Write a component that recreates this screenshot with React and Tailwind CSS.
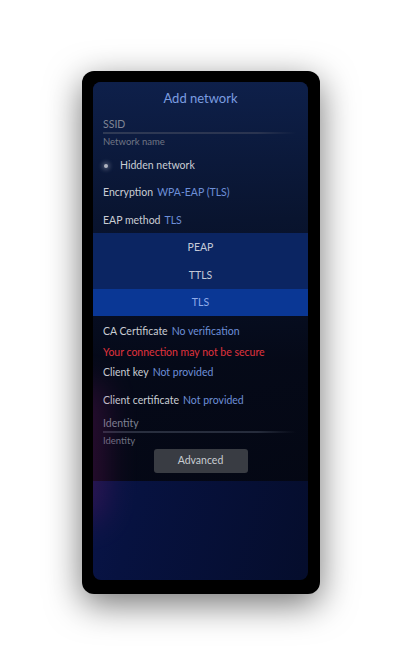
import React from "react";

const font = { fontFamily: '"Lato", "Open Sans", sans-serif' };

function Row({ h, children, className = "" }) {
  return (
    <div className={`flex items-center pl-[10px] ${className}`} style={{ height: h }}>
      {children}
    </div>
  );
}

export default function App() {
  return (
    <div className="w-[400px] h-[659px] bg-white pt-[71px] pl-[82px]" style={font}>
      <div className="w-[238px] h-[523px] bg-black rounded-[12px] pt-[11px] pl-[11px] pr-[12px] pb-[14px] shadow-[0_10px_35px_rgba(0,0,0,0.55)]">
        <div className="relative w-full h-full rounded-[8px] overflow-hidden bg-[linear-gradient(105deg,#0d1155_0%,#0b1650_15%,#071240_45%,#050d2c_100%)]">
          <div className="relative flex flex-col h-[399px] bg-[linear-gradient(180deg,rgba(14,32,74,0.97)_0%,rgba(9,20,46,0.96)_35%,rgba(5,9,22,0.95)_70%,rgba(4,7,18,0.93)_100%)]">
            <div className="h-[32px] pt-[2px] flex items-center justify-center text-[13px] text-[#7b9de0]">
              Add network
            </div>
            <Row h={18} className="pt-[3px] text-[10.5px] text-[#7f8594]">SSID</Row>
            <div className="ml-[10px] mr-[12px] h-[2px] bg-[linear-gradient(90deg,#2f3a55_0%,#2a3450_80%,rgba(42,52,80,0)_100%)]"></div>
            <Row h={16} className="pt-[1px] text-[9.5px] text-[#6f7584]">Network name</Row>
            <Row h={28} className="pt-[3px] text-[10.5px] text-[#c9cdd4]">
              <span className="w-[4px] h-[4px] rounded-full bg-[#b0b4c0] shadow-[0_0_4px_2px_rgba(200,205,220,0.3)] ml-[1px] mr-[12px]"></span>
              Hidden network
            </Row>
            <Row h={27} className="pt-[2px] text-[10.5px] text-[#c9cdd4]">
              Encryption<span className="ml-[4px] text-[#6d8fd8]">WPA-EAP (TLS)</span>
            </Row>
            <Row h={28} className="pt-[3px] text-[10.5px] text-[#c9cdd4]">
              EAP method<span className="ml-[4px] text-[#6d8fd8]">TLS</span>
            </Row>
            <div className="flex flex-col text-[10.5px]">
              <div className="h-[28px] pt-[1px] flex items-center justify-center bg-[#0b2562] text-[#c5cad8]">PEAP</div>
              <div className="h-[28px] pt-[1px] flex items-center justify-center bg-[#0b2562] text-[#c5cad8]">TTLS</div>
              <div className="h-[27px] pt-[1px] flex items-center justify-center bg-[#0a3795] text-[#8fabea]">TLS</div>
            </div>
            <Row h={28} className="pt-[3px] text-[10.5px] text-[#c9cdd4]">
              CA Certificate<span className="ml-[4px] text-[#6d8fd8]">No verification</span>
            </Row>
            <Row h={17} className="pt-[1px] text-[10.5px] text-[#e0333d]">Your connection may not be secure</Row>
            <Row h={22} className="pt-[2px] text-[10.5px] text-[#c9cdd4]">
              Client key<span className="ml-[4px] text-[#6d8fd8]">Not provided</span>
            </Row>
            <Row h={33} className="pt-[3px] text-[10.5px] text-[#c9cdd4]">
              Client certificate<span className="ml-[4px] text-[#6d8fd8]">Not provided</span>
            </Row>
            <Row h={15} className="pt-[1px] text-[10.5px] text-[#7f8594]">Identity</Row>
            <div className="ml-[10px] mr-[12px] h-[2px] bg-[linear-gradient(90deg,#2a3040_0%,#262c3c_80%,rgba(38,44,60,0)_100%)]"></div>
            <Row h={16} className="pt-[1px] text-[9.5px] text-[#6f7584]">Identity</Row>
            <div className="flex justify-center">
              <div className="w-[94px] h-[24px] rounded-[3px] bg-[#393c43] flex items-center justify-center text-[10.5px] text-[#c8ccd2]">
                Advanced
              </div>
            </div>
          </div>
          <div className="absolute left-[-28px] top-[300px] w-[40px] h-[140px] rounded-full bg-[#8a1a70] opacity-30 blur-[16px] pointer-events-none"></div>
        </div>
      </div>
    </div>
  );
}
